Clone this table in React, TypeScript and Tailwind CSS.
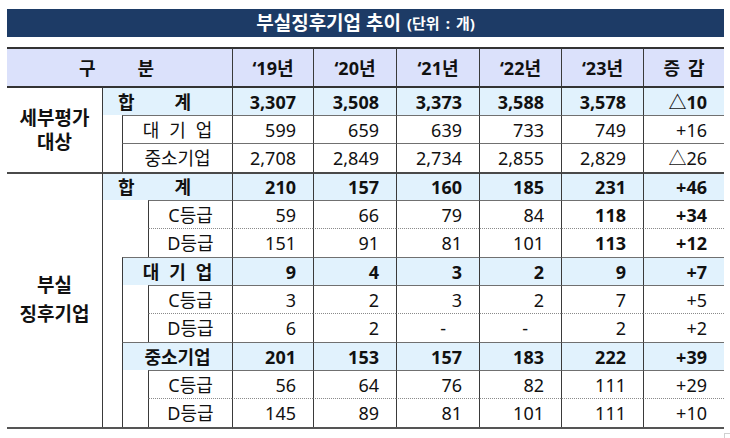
import React from "react";

const RS = ["", "row-start-1", "row-start-2", "row-start-3", "row-start-4", "row-start-5", "row-start-6", "row-start-7", "row-start-8", "row-start-9", "row-start-10", "row-start-11", "row-start-12", "row-start-13"];
const CS = ["", "col-start-1", "col-start-2", "col-start-3", "col-start-4", "col-start-5", "col-start-6", "col-start-7", "col-start-8", "col-start-9", "col-start-10"];

type Top = "thick" | "group" | "gray" | "dot";
const TOP: Record<Top, string> = {
  thick: "border-t-2 border-t-[#333]",
  group: "border-t-2 border-t-[#4a4a4a]",
  gray: "border-t border-t-[#707070]",
  dot: "border-t border-t-[#8a8a8a] [border-top-style:dotted]",
};
const VL = "border-l border-l-[#3a3a3a]";
const BLUE = "bg-[#e1f2fd]";

type DataRow = { r: number; vals: string[]; top: Top; bold?: boolean; blue?: boolean; boldIdx?: number[] };

const rows: DataRow[] = [
  { r: 2, vals: ["3,307", "3,508", "3,373", "3,588", "3,578", "△10"], top: "thick", bold: true, blue: true },
  { r: 3, vals: ["599", "659", "639", "733", "749", "+16"], top: "gray" },
  { r: 4, vals: ["2,708", "2,849", "2,734", "2,855", "2,829", "△26"], top: "gray" },
  { r: 5, vals: ["210", "157", "160", "185", "231", "+46"], top: "group", bold: true, blue: true },
  { r: 6, vals: ["59", "66", "79", "84", "118", "+34"], top: "gray", boldIdx: [4, 5] },
  { r: 7, vals: ["151", "91", "81", "101", "113", "+12"], top: "dot", boldIdx: [4, 5] },
  { r: 8, vals: ["9", "4", "3", "2", "9", "+7"], top: "gray", bold: true, blue: true },
  { r: 9, vals: ["3", "2", "3", "2", "7", "+5"], top: "gray" },
  { r: 10, vals: ["6", "2", "-", "-", "2", "+2"], top: "dot" },
  { r: 11, vals: ["201", "153", "157", "183", "222", "+39"], top: "gray", bold: true, blue: true },
  { r: 12, vals: ["56", "64", "76", "82", "111", "+29"], top: "gray" },
  { r: 13, vals: ["145", "89", "81", "101", "111", "+10"], top: "dot" },
];

const years = ["\u201819년", "\u201820년", "\u201821년", "\u201822년", "\u201823년"];

function Spaced({ chars, gap }: { chars: string[]; gap: string }) {
  return (
    <div className={`flex ${gap}`}>
      {chars.map((c, i) => (
        <span key={i}>{c}</span>
      ))}
    </div>
  );
}

export default function App() {
  return (
    <div
      className="w-[730px] h-[438px] bg-white overflow-hidden text-[#111]"
      style={{ fontFamily: '"Noto Sans", "Noto Sans CJK KR", sans-serif' }}
    >
      <div className="ml-[7px] mt-[9px] w-[717px] h-[28px] bg-[#1d3b66] flex items-center justify-center text-white font-bold">
        <span className="text-[19px] leading-none">부실징후기업 추이</span>
        <span className="text-[15px] leading-none ml-[6px] flex items-center">
          <span>(단위</span>
          <span className="mx-[6px]">:</span>
          <span>개)</span>
        </span>
      </div>

      <div className="ml-[7px] mt-[10px] w-[717px] grid grid-cols-[95px_20px_26px_84px_81px_83px_83px_82px_82px_81px] grid-rows-[39px_29px_28px_29px_28px_28px_29px_28px_28px_29px_28px_28px_29px] border-b-2 border-b-[#555] text-[18px] leading-none">
        {/* header */}
        <div className={`col-start-1 col-span-4 row-start-1 bg-[#dbe1fb] ${TOP.thick} flex items-center justify-center font-bold gap-[42px] pr-[6px]`}>
          <span>구</span>
          <span>분</span>
        </div>
        {years.map((y, i) => (
          <div key={y} className={`${CS[5 + i]} row-start-1 bg-[#dbe1fb] ${TOP.thick} ${VL} flex items-center justify-center font-bold`}>
            {y}
          </div>
        ))}
        <div className={`col-start-10 row-start-1 bg-[#dbe1fb] ${TOP.thick} ${VL} flex items-center justify-center font-bold gap-[8px]`}>
          <span>증</span>
          <span>감</span>
        </div>

        {/* group A */}
        <div className={`col-start-1 row-start-2 row-span-3 ${TOP.thick} flex flex-col items-center justify-center font-bold leading-[24px] text-[19px]`}>
          <span>세부평가</span>
          <span>대상</span>
        </div>
        <div className={`col-start-2 col-span-3 row-start-2 ${BLUE} ${TOP.thick} ${VL} flex items-center pl-[15px] font-bold`}>
          <Spaced chars={["합", "계"]} gap="gap-[40px]" />
        </div>
        <div className={`col-start-2 row-start-3 row-span-2 ${VL}`} />
        <div className={`col-start-3 col-span-2 row-start-3 ${TOP.gray} ${VL} flex items-center justify-center`}>
          <Spaced chars={["대", "기", "업"]} gap="gap-[10px]" />
        </div>
        <div className={`col-start-3 col-span-2 row-start-4 ${TOP.gray} ${VL} flex items-center justify-center`}>
          중소기업
        </div>

        {/* group B */}
        <div className={`col-start-1 row-start-5 row-span-9 ${TOP.group} flex flex-col items-center justify-center font-bold leading-[29px] pb-[2px] text-[19px]`}>
          <span>부실</span>
          <span>징후기업</span>
        </div>
        <div className={`col-start-2 col-span-3 row-start-5 ${BLUE} ${TOP.group} ${VL} flex items-center pl-[15px] font-bold`}>
          <Spaced chars={["합", "계"]} gap="gap-[40px]" />
        </div>
        <div className={`col-start-2 col-span-2 row-start-6 row-span-2 ${VL}`} />
        <div className={`col-start-4 row-start-6 ${TOP.gray} ${VL} flex items-center justify-center`}>C등급</div>
        <div className={`col-start-4 row-start-7 ${TOP.dot} ${VL} flex items-center justify-center`}>D등급</div>

        <div className={`col-start-2 row-start-8 row-span-6 ${VL}`} />
        <div className={`col-start-3 col-span-2 row-start-8 ${BLUE} ${TOP.gray} ${VL} flex items-center justify-center font-bold`}>
          <Spaced chars={["대", "기", "업"]} gap="gap-[10px]" />
        </div>
        <div className={`col-start-3 row-start-9 row-span-2 ${VL}`} />
        <div className={`col-start-4 row-start-9 ${TOP.gray} ${VL} flex items-center justify-center`}>C등급</div>
        <div className={`col-start-4 row-start-10 ${TOP.dot} ${VL} flex items-center justify-center`}>D등급</div>

        <div className={`col-start-3 col-span-2 row-start-11 ${BLUE} ${TOP.gray} ${VL} flex items-center justify-center font-bold`}>
          중소기업
        </div>
        <div className={`col-start-3 row-start-12 row-span-2 ${VL}`} />
        <div className={`col-start-4 row-start-12 ${TOP.gray} ${VL} flex items-center justify-center`}>C등급</div>
        <div className={`col-start-4 row-start-13 ${TOP.dot} ${VL} flex items-center justify-center`}>D등급</div>

        {/* data */}
        {rows.map((row) =>
          row.vals.map((v, i) => {
            const b = row.bold || (row.boldIdx && row.boldIdx.includes(i));
            return (
              <div
                key={`${row.r}-${i}`}
                className={`${CS[5 + i]} ${RS[row.r]} ${TOP[row.top]} ${VL} ${row.blue ? BLUE : ""} flex items-center justify-end ${v === "-" ? "pr-[33px]" : "pr-[17px]"} ${b ? "font-bold" : ""}`}
              >
                {v}
              </div>
            );
          })
        )}
      </div>
      <div className="w-[730px] flex justify-end">
        <div className="w-[6px] h-[6px] mt-[4px] border-l border-t border-[#d0d0d0]" />
      </div>
    </div>
  );
}
